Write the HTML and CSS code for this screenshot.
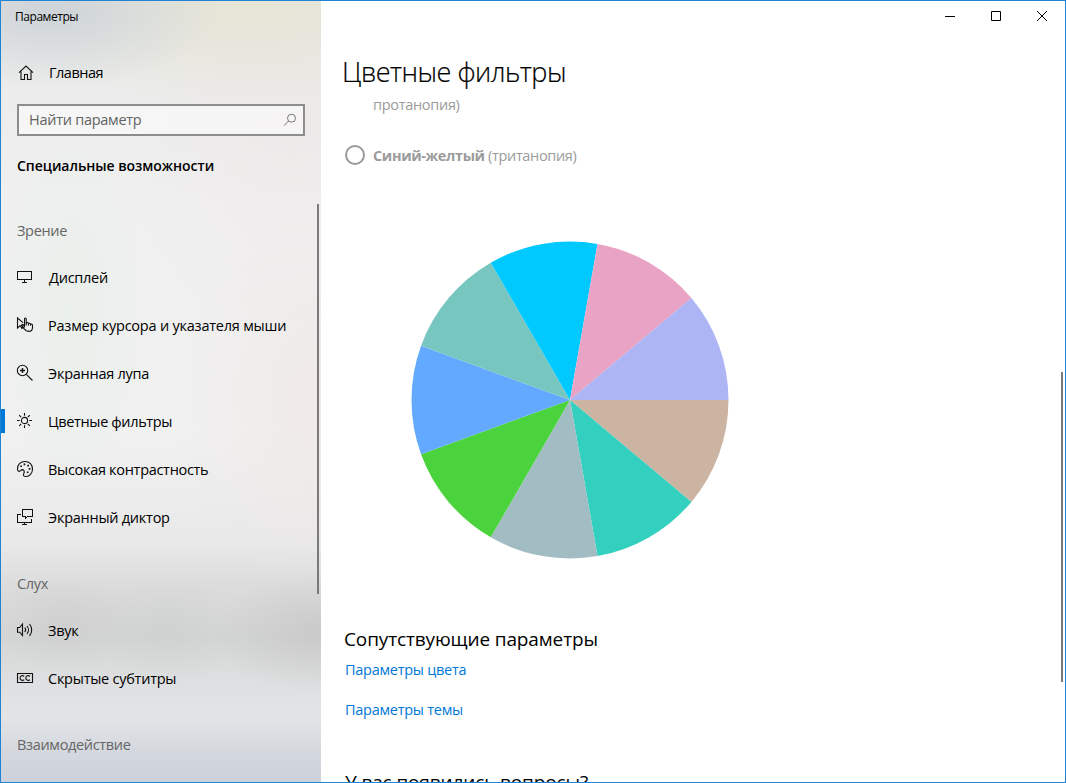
FILE: index.html
```html
<!DOCTYPE html>
<html lang="ru">
<head>
<meta charset="utf-8">
<title>Параметры</title>
<link rel="stylesheet" href="styles.css">
</head>
<body>
<div class="window">
  <aside class="sidebar">
    <div class="app-title">Параметры</div>
    <a class="nav-item home">
      <svg class="icon" viewBox="0 0 18 18"><path d="M2 8.700 9 2l7 6.700M4 7.500v8h3.500v-5h3v5H14v-8"/></svg>
      <span>Главная</span>
    </a>
    <div class="search">
      <span>Найти параметр</span>
      <svg class="search-icon" viewBox="0 0 14 14"><circle cx="8.500" cy="5.200" r="4"/><path d="M5.600 8 1 12.700"/></svg>
    </div>
    <h2 class="section">Специальные возможности</h2>
    <nav class="nav">
      <div class="group first">Зрение</div>
      <a class="nav-item display">
        <svg class="icon crisp" viewBox="0 0 18 18"><path d="M1.500 3.500h14v8h-14zM8.500 11.500v3M6 14.500h5"/></svg>
        <span>Дисплей</span>
      </a>
      <a class="nav-item cursor">
        <svg class="icon" viewBox="0 0 18 18"><path d="M7 6.700 1.500 2v10l2.700-2.500 1.800 3 1-.6-1.500-3"/><path d="M8.500 10.500V3c0-1.300 1.700-1.300 1.700 0v4c1-.8 2-.5 2.200.5 1-.6 1.900-.2 2.100.6 1.200-.4 2 .2 2 1.300v2c0 2.500-1.500 4-4 4-2 0-3.200-1-4.300-2.500L6 9.500c-.5-1 .7-1.500 1.400-.6zM10.200 7v2.500M12.400 7.500v2M14.500 8.100v1.700"/></svg>
        <span>Размер курсора и указателя мыши</span>
      </a>
      <a class="nav-item">
        <svg class="icon" viewBox="0 0 18 18"><circle cx="6.500" cy="6.500" r="5.200"/><path d="m10.300 10.300 6.200 6.200"/><path class="strong" d="M4 6.500h5M6.500 4v5"/></svg>
        <span>Экранная лупа</span>
      </a>
      <a class="nav-item selected">
        <svg class="icon" viewBox="0 0 18 18"><circle cx="8.500" cy="8.500" r="3.100"/><path d="M8.500 1v2.700M8.500 13.300V16M1 8.500h2.700M13.300 8.500H16M3.200 3.200l2 2M11.800 11.800l2 2M13.800 3.200l-2 2M5.200 11.800l-2 2"/></svg>
        <span>Цветные фильтры</span>
      </a>
      <a class="nav-item contrast">
        <svg class="icon" viewBox="0 0 18 18"><path d="M1.500 9.200C1.200 4.500 4.500 1.500 9 1.500c4.600 0 7.500 3.300 7.500 7.500 0 4.400-3 7.500-6.500 7.500-2.500 0-3-1.200-2.200-2.900.8-1.700.6-3.800-1.300-4-2 .1-2.200 2.200-3.700 1.700-.9-.3-1.300-1.100-1.300-2.100z"/><path class="dots" d="M4.300 5.400h1.700v1.700H4.300zM7.600 3.500h1.700v1.700H7.600zM11.300 4.700H13v1.700h-1.700zM12.700 8h1.700v1.700h-1.700zM10.800 11.400h1.700v1.700h-1.700z"/></svg>
        <span>Высокая контрастность</span>
      </a>
      <a class="nav-item">
        <svg class="icon crisp" viewBox="0 0 18 18"><path d="M6.500 1.500h10v7h-5l-2.500 2v-2H6.500zM4.500 6.500h-3v8h14v-4M8.500 14.500v2M6 16.500h5"/></svg>
        <span>Экранный диктор</span>
      </a>
      <div class="group">Слух</div>
      <a class="nav-item">
        <svg class="icon" viewBox="0 0 18 18"><path d="M1.500 6.500h2.200L6.500 3v11.500l-2.800-3.300H1.500zM8.800 6.700c1 1.200 1 3 0 4.300M11 5c1.900 2.200 1.900 5.600 0 7.800M13.500 3c2.900 3.500 2.900 8.300 0 11.800"/></svg>
        <span>Звук</span>
      </a>
      <a class="nav-item">
        <svg class="icon" viewBox="0 0 18 18"><path d="M1.500 4.500h15v9h-15zM8.200 7.300c-1.500-1.200-4.200-.8-4.200 1.700s2.700 2.900 4.200 1.700M14 7.300c-1.500-1.200-4.200-.8-4.200 1.700s2.700 2.900 4.200 1.700"/></svg>
        <span>Скрытые субтитры</span>
      </a>
      <div class="group">Взаимодействие</div>
    </nav>
    <div class="scrollbar side-scroll"></div>
  </aside>
  <main class="content">
    <div class="caption">
      <svg viewBox="0 0 10 10"><path d="M0 5.500h10"/></svg>
      <svg viewBox="0 0 10 10"><path d="M.5.500h9v9h-9z"/></svg>
      <svg viewBox="0 0 10 10"><path d="m0 0 10 10M10 0 0 10"/></svg>
    </div>
    <h1>Цветные фильтры</h1>
    <div class="option-tail">протанопия)</div>
    <div class="option"><span class="radio"></span><span><b>Синий-желтый</b> <span class="kind">(тританопия)</span></span></div>
    <svg class="wheel" viewBox="-159 -159 318 318">
      <path fill="#ccb4a2" d="M0 0L158.500 0A158.500 158.500 0 0 1 121.418 101.882z"/>
      <path fill="#33cfbf" d="M0 0L121.418 101.882A158.500 158.500 0 0 1 27.523 156.092z"/>
      <path fill="#a2bcc3" d="M0 0L27.523 156.092A158.500 158.500 0 0 1 -79.250 137.265z"/>
      <path fill="#4bd33d" d="M0 0L-79.250 137.265A158.500 158.500 0 0 1 -148.941 54.210z"/>
      <path fill="#63a9ff" d="M0 0L-148.941 54.210A158.500 158.500 0 0 1 -148.941 -54.210z"/>
      <path fill="#78c6c0" d="M0 0L-148.941 -54.210A158.500 158.500 0 0 1 -79.250 -137.265z"/>
      <path fill="#00c9ff" d="M0 0L-79.250 -137.265A158.500 158.500 0 0 1 27.523 -156.092z"/>
      <path fill="#e9a3c4" d="M0 0L27.523 -156.092A158.500 158.500 0 0 1 121.418 -101.882z"/>
      <path fill="#aeb5f4" d="M0 0L121.418 -101.882A158.500 158.500 0 0 1 158.500 0z"/>
    </svg>
    <h3>Сопутствующие параметры</h3>
    <a class="link">Параметры цвета</a>
    <a class="link theme">Параметры темы</a>
    <h3 class="questions">У вас появились вопросы?</h3>
    <div class="scrollbar main-scroll"></div>
  </main>
</div>
</body>
</html>
```
FILE: styles.css
```css
* { box-sizing: border-box; }
body { margin: 0; font: 14.5px/20px "Open Sans", "Noto Sans", sans-serif; color: #000; }
h1, h2, h3 { margin: 0; font-weight: 400; }
.window { display: flex; width: 1066px; height: 783px; border: 1px solid #1f84d6; overflow: hidden; background: #fff; white-space: nowrap; }
.sidebar {
  position: relative; width: 320px; flex: none; overflow: hidden;
  background:
    radial-gradient(ellipse 170px 75px at 50px 10px, rgba(196,204,213,.7), transparent),
    radial-gradient(ellipse 260px 100px at 250px 5px, rgba(230,229,212,.9), transparent),
    radial-gradient(ellipse 170px 230px at 290px 130px, rgba(238,229,230,.5), transparent),
    radial-gradient(ellipse 150px 190px at 320px 400px, rgba(239,230,229,.7), transparent),
    radial-gradient(ellipse 90px 220px at 70px 310px, rgba(231,239,233,.7), transparent),
    radial-gradient(ellipse 110px 60px at 320px 632px, rgba(192,192,192,.55), transparent),
    radial-gradient(ellipse 75px 50px at 65px 622px, rgba(198,198,198,.4), transparent),
    radial-gradient(ellipse 75px 55px at 165px 628px, rgba(200,203,203,.4), transparent),
    linear-gradient(#e4e5e4 0, #ebeceb 90px, #f0f0f0 200px, #f1f1f1 430px, #e9e9e9 540px, #dcdcdc 585px, #d4d5d5 635px, #dedfe0 680px, #e3e4e6 715px, #d4d8de 750px, #ccd1db 782px);
}
.app-title { height: 32px; padding-left: 14px; font-size: 12px; line-height: 32px; letter-spacing: -.45px; }
.nav-item { position: relative; display: flex; align-items: center; height: 48px; padding-left: 15px; gap: 14px; letter-spacing: -.25px; }
.home { height: 40px; margin-top: 20px; padding-left: 16px; letter-spacing: -.5px; }
.display { gap: 15px; }
.cursor { letter-spacing: -.22px; }
.selected { letter-spacing: -.36px; }
.contrast { letter-spacing: -.3px; }
.icon { width: 18px; height: 18px; margin-top: -3px; fill: none; stroke: #111; stroke-width: 1.1; }
.home .icon { margin-top: 0; }
.crisp { stroke-width: 1; shape-rendering: crispEdges; }
.icon .strong { stroke-width: 1.4; }
.icon .dots { fill: #111; stroke: none; }
.search { display: flex; align-items: center; justify-content: space-between; width: 288px; height: 32px; margin: 11px 0 0 16px; padding: 0 6px 0 10px; border: 2px solid #8d8d8d; background: rgba(255,255,255,.5); color: #636363; letter-spacing: -.27px; }
.search-icon { width: 14px; height: 14px; fill: none; stroke: #777; }
.section { height: 71px; padding: 20px 0 0 16px; font-size: 14px; line-height: 20px; font-weight: 600; letter-spacing: -.04px; }
.group { height: 46px; margin-top: 19px; padding-left: 16px; line-height: 46px; color: #666; letter-spacing: -.33px; }
.group.first { height: 47px; margin-top: 0; line-height: 48px; }
.selected::before { content: ""; position: absolute; left: 0; top: 11px; width: 4px; height: 24px; background: #0078d7; }
.scrollbar { position: absolute; width: 2px; background: #7a7a7a; }
.side-scroll { left: 316px; top: 203px; height: 390px; }
.content { position: relative; flex: 1; padding-left: 23px; overflow: hidden; }
.caption { display: flex; justify-content: flex-end; gap: 36px; height: 32px; padding: 10px 18px 0 0; }
.caption svg { width: 10px; height: 10px; overflow: visible; fill: none; stroke: #000; stroke-width: 1; }
h1 { margin-top: 19px; margin-left: -2px; font-size: 27px; font-weight: 300; line-height: 40px; letter-spacing: -.5px; -webkit-text-stroke: .2px #000; }
.option-tail { margin: 3px 0 0 29px; color: #9b9b9b; letter-spacing: -.3px; }
.option { display: flex; align-items: center; gap: 8px; height: 24px; margin: 29px 0 0 1px; color: #9b9b9b; letter-spacing: -.38px; }
.kind { letter-spacing: -.34px; }
.radio { width: 20px; height: 20px; margin-top: -3px; border: 2px solid #999; border-radius: 50%; }
.wheel { display: block; width: 318px; height: 318px; margin: 73px 0 0 67px; }
h3 { margin-top: 66px; font-size: 19px; line-height: 28px; letter-spacing: -.13px; }
.link { display: block; margin: 7px 0 0 1px; color: #0078d7; letter-spacing: -.27px; }
.theme { margin-top: 20px; }
h3.questions { margin: 48px 0 0 1px; }
.main-scroll { left: 740px; top: 371px; height: 310px; }
```
